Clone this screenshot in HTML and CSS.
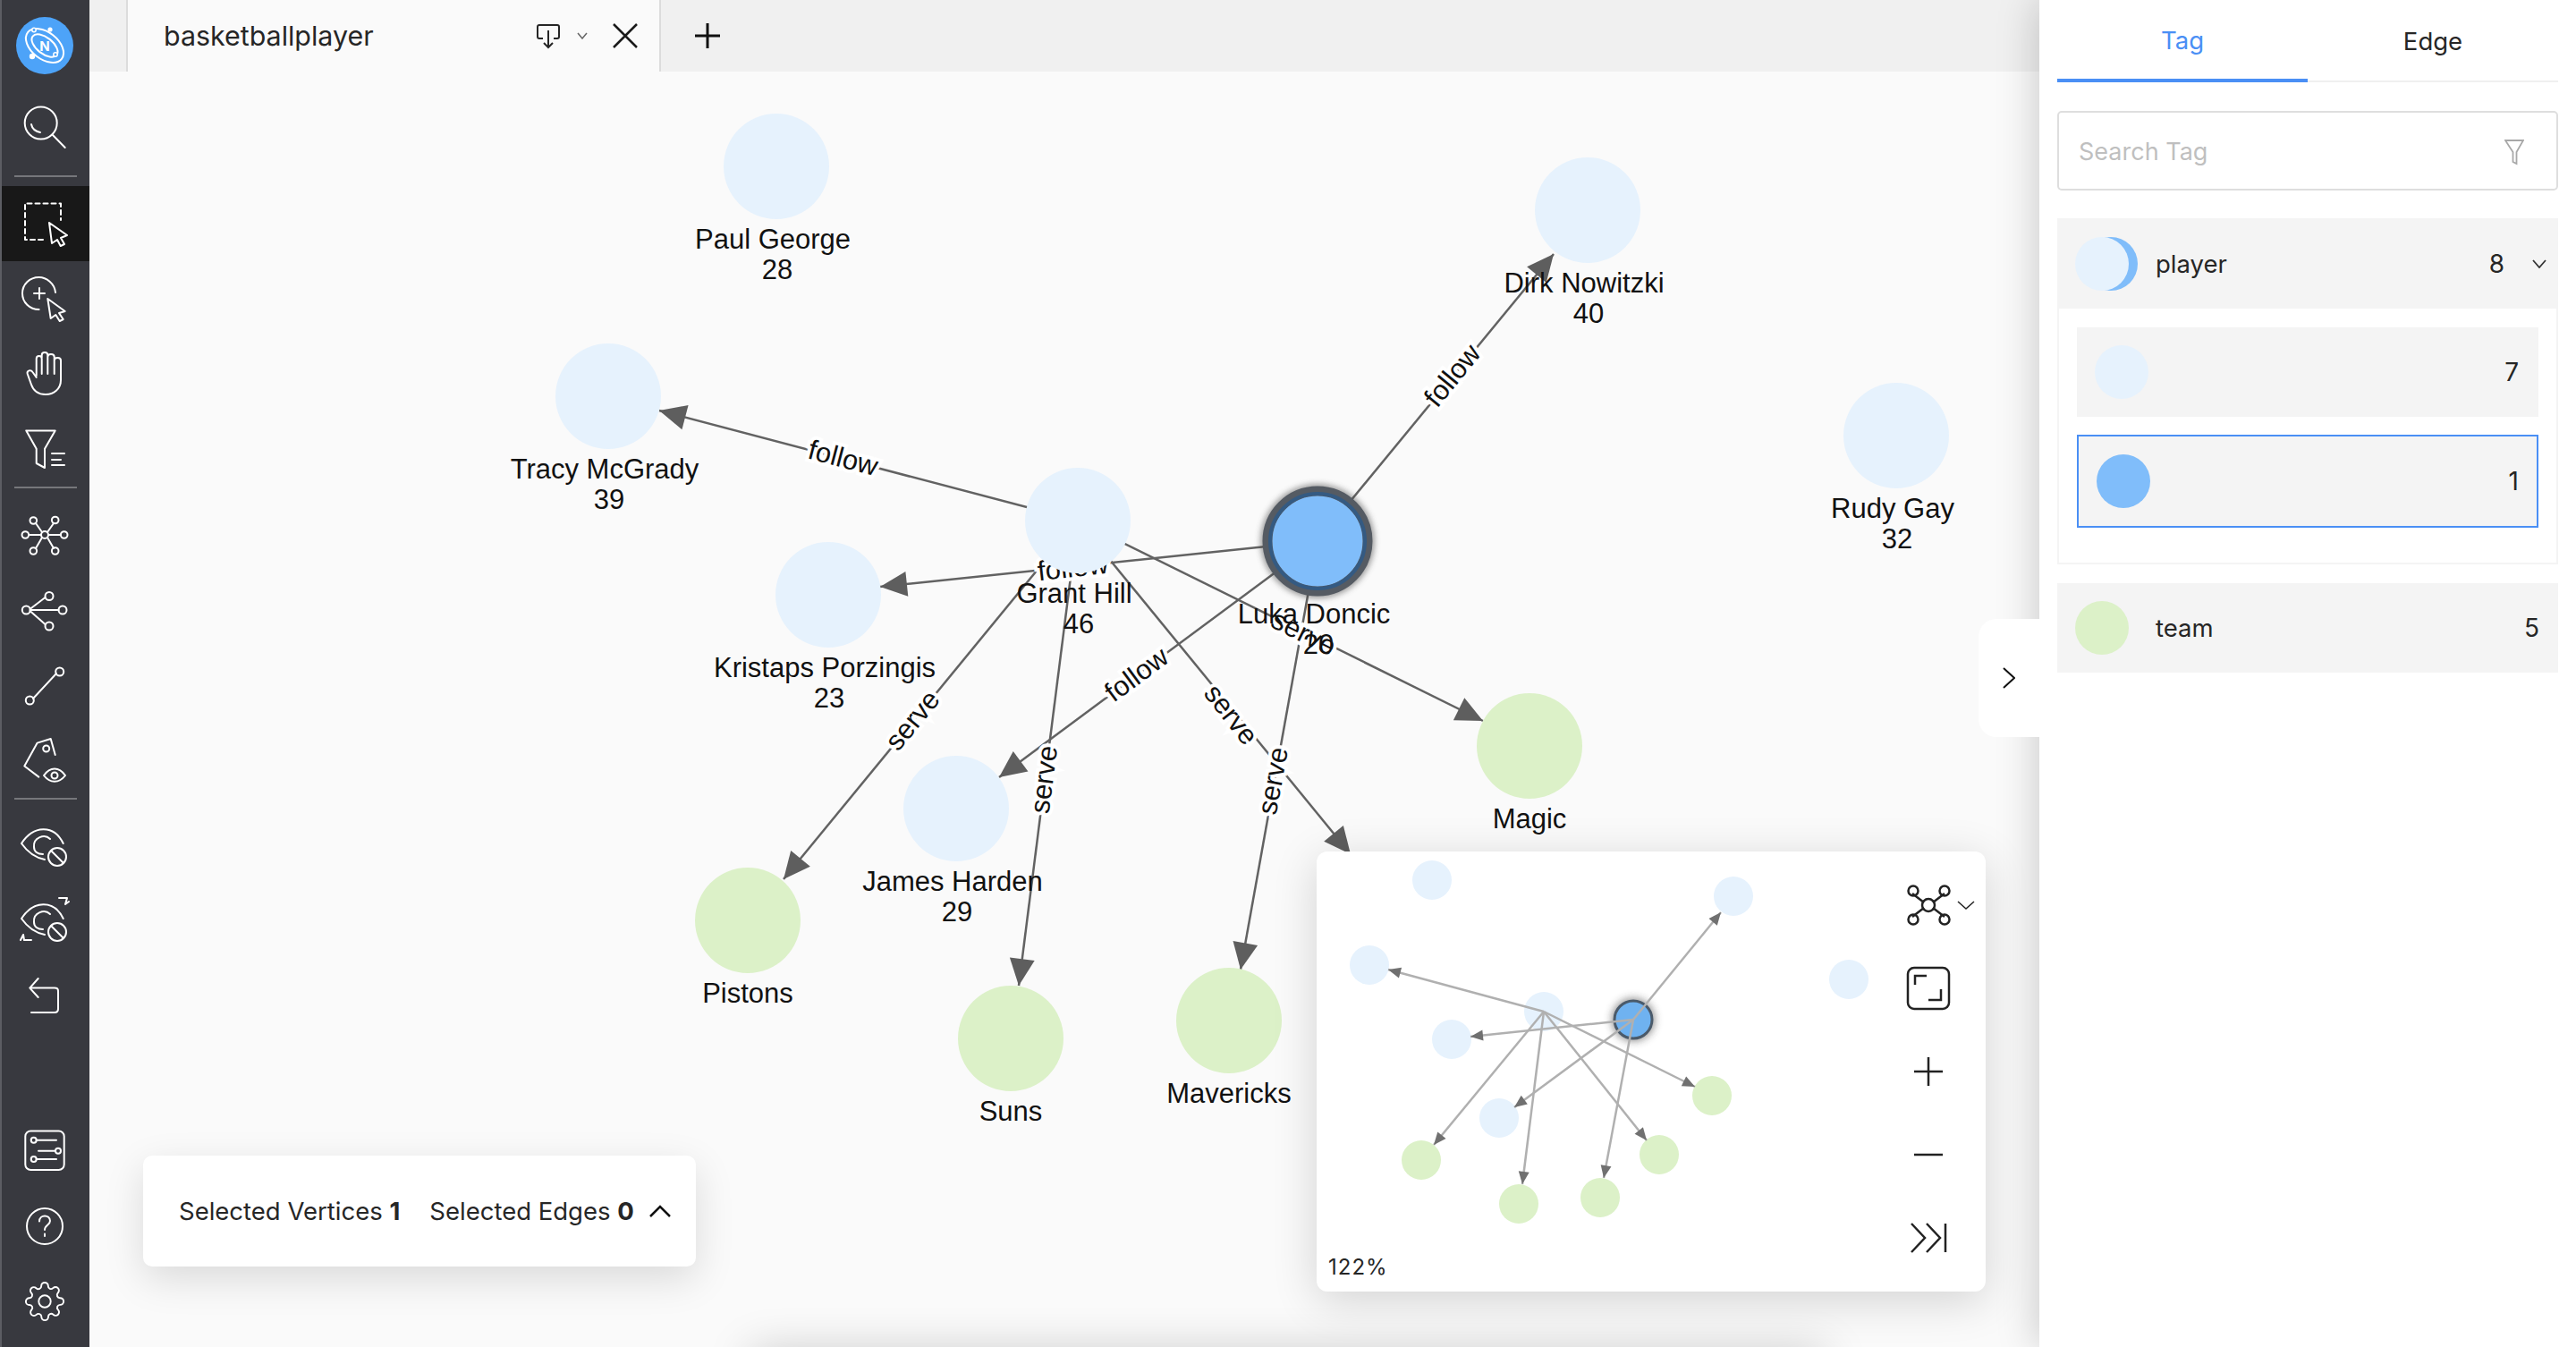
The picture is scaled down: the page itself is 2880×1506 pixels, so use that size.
FILE: index.html
```html
<!DOCTYPE html>
<html lang="en">
<head>
    <meta charset="UTF-8" />
    <title>basketballplayer</title>
    <link rel="stylesheet" href="styles.css">
</head>
<body>

<div class="app">
    <aside class="sidebar">
        <div class="logo">
            <svg width="64" height="64" viewBox="0 0 64 64">
                <circle cx="32" cy="32" r="32" fill="#4da3f8"/>
                <g fill="none" stroke="#fff" stroke-width="2" transform="rotate(38 32 32)">
                    <ellipse cx="32" cy="32" rx="24" ry="15"/>
                    <ellipse cx="32" cy="32" rx="17" ry="9"/>
                </g>
                <circle cx="38" cy="14" r="2.6" fill="#fff"/>
                <circle cx="20" cy="14.500" r="2.2" fill="#4da3f8" stroke="#fff" stroke-width="1.5"/>
                <circle cx="18" cy="44" r="3.2" fill="#fff"/>
                <circle cx="44" cy="42" r="2.2" fill="#4da3f8" stroke="#fff" stroke-width="1.5"/>
                <text x="32" y="37.500" class="logo-letter">N</text>
            </svg>
        </div>

        <div class="tool tool-search">
            <svg class="icon" viewBox="0 0 60 60"><circle cx="25.700" cy="26.500" r="18"/><path d="M38.500 39.500 52.700 54M15 28c1 5 5 8 10 9"/></svg>
        </div>
        <div class="divider"></div>

        <div class="tool active">
            <svg class="icon" viewBox="0 0 60 60"><path d="M28 48H8V7.500H48V26" stroke-dasharray="5 4"/><path d="M35 29 55 43 48 46 52 53 47.700 55 44 48 38 52Z"/></svg>
        </div>
        <div class="tool">
            <svg class="icon" viewBox="0 0 60 60"><path d="M42 23C41 13 32 6 23.600 6 13 6 5 14 5 24 5 34 13 42 23.600 42M18 24H30M24 18V30"/><path d="M33.300 30 52.700 44 46 46 50.700 53 46.700 55 42.300 48 36.700 52Z"/></svg>
        </div>
        <div class="tool">
            <svg class="icon" viewBox="0 0 60 60"><path d="M20.700 32V13C20.700 9 26.700 9 26.700 13V30M26.700 12V9C26.700 5 33.300 5 33.300 9V30M33.300 11C33.300 7 40.700 7 40.700 11V30M40.700 15C40.700 11 48 11 48 15V37C48 47 40 53 31 53 22 53 17 48 15 42L10.700 30C9.700 26 14.500 25 16.500 28L20.700 34"/></svg>
        </div>
        <div class="tool">
            <svg class="icon" viewBox="0 0 60 60"><path d="M9.300 9.400H41.700L30 29.800V51L20.700 46V29.800ZM38 35H52M38 42H48M38 48H52"/></svg>
        </div>
        <div class="divider divider-tight"></div>

        <div class="tool">
            <svg class="icon" viewBox="0 0 60 60"><path d="M12 30H26M34 30H48M20 17 27 27M40 17 33 27M20 45 27 33M40 45 33 33"/><circle cx="30" cy="30" r="4"/><circle cx="8.300" cy="30" r="3.800"/><circle cx="51.700" cy="30" r="3.800"/><circle cx="17.300" cy="14" r="3.800"/><circle cx="41.700" cy="13.500" r="3.800"/><circle cx="17.300" cy="48" r="3.800"/><circle cx="41.700" cy="48" r="3.800"/></svg>
        </div>
        <div class="tool">
            <svg class="icon" viewBox="0 0 60 60"><path d="M13.500 29 30.500 16M13.800 30H45.500M13.500 31 30.500 46"/><circle cx="9.300" cy="30" r="4.500"/><circle cx="35" cy="14.500" r="4.500"/><circle cx="50" cy="30" r="4.500"/><circle cx="35" cy="48" r="4.500"/></svg>
        </div>
        <div class="tool">
            <svg class="icon" viewBox="0 0 60 60"><path d="M17 45 43 17"/><circle cx="13.300" cy="47" r="4.500"/><circle cx="46.700" cy="15" r="4.500"/></svg>
        </div>
        <div class="tool">
            <svg class="icon" viewBox="0 0 60 60"><path d="M23.300 48.600 7.300 36.500 21.700 10.600 36.700 6 41.700 24"/><circle cx="31.700" cy="17" r="3.500"/><path d="M29 47C36 37 46 37 53 47 46 56 36 56 29 47Z"/><circle cx="41" cy="47" r="3.500"/></svg>
        </div>
        <div class="divider divider-tight"></div>

        <div class="tool">
            <svg class="icon" viewBox="0 0 60 60"><path d="M50.700 27C40 5 17 7 4 27 11 37 20 43 30 45"/><path d="M36 22C30 16 17 20 18 31 18 36 22 39 28 39"/><circle cx="44" cy="42" r="10"/><path d="M37 35 51 49"/></svg>
        </div>
        <div class="tool">
            <svg class="icon" viewBox="0 0 60 60"><path d="M50.700 27C40 5 17 7 4 27 11 37 20 43 30 45"/><path d="M36 22C30 16 17 20 18 31 18 36 22 39 28 39"/><circle cx="44" cy="42" r="10"/><path d="M37 35 51 49M46 4H55L53 11 57 8M3 51 6 45 7 51H15"/></svg>
        </div>
        <div class="tool">
            <svg class="icon" viewBox="0 0 60 60"><path d="M22.700 10 13.300 20.600 22.700 31M13.300 20.600H41C44 20.600 45 22 45 24V44C45 47 44 48 41 48H15"/></svg>
        </div>

        <div class="tool tool-bottom">
            <svg class="icon" viewBox="0 0 60 60"><rect x="8.300" y="7.500" width="43.400" height="43.500" rx="6"/><circle cx="17.700" cy="17.700" r="3"/><path d="M20.700 17.700H43M23 29.700H42"/><circle cx="45" cy="29.700" r="3"/><circle cx="17.700" cy="39" r="3"/><path d="M20.700 39H43"/></svg>
        </div>
        <div class="tool">
            <svg class="icon" viewBox="0 0 60 60"><circle cx="30" cy="30" r="20"/><path d="M24 24.500C24 16.500 36 16.500 36 24 36 28.500 30 28.500 30 34"/><path d="M30 38.500V41"/></svg>
        </div>
        <div class="tool">
            <svg class="icon gear" viewBox="0 0 24 24"><circle cx="12" cy="12" r="3.500"/><path d="M19.400 15a1.650 1.650 0 0 0 .33 1.820l.06.06a2 2 0 0 1 0 2.830 2 2 0 0 1-2.830 0l-.06-.06a1.650 1.650 0 0 0-1.820-.33 1.650 1.650 0 0 0-1 1.510V21a2 2 0 0 1-2 2 2 2 0 0 1-2-2v-.09A1.650 1.650 0 0 0 9 19.400a1.650 1.650 0 0 0-1.820.33l-.06.06a2 2 0 0 1-2.830 0 2 2 0 0 1 0-2.830l.06-.06a1.650 1.650 0 0 0 .33-1.820 1.650 1.650 0 0 0-1.510-1H3a2 2 0 0 1-2-2 2 2 0 0 1 2-2h.09A1.650 1.650 0 0 0 4.600 9a1.650 1.650 0 0 0-.33-1.820l-.06-.06a2 2 0 0 1 0-2.830 2 2 0 0 1 2.830 0l.06.06a1.650 1.650 0 0 0 1.820.33H9a1.650 1.650 0 0 0 1-1.510V3a2 2 0 0 1 2-2 2 2 0 0 1 2 2v.09a1.650 1.650 0 0 0 1 1.510 1.650 1.650 0 0 0 1.820-.33l.06-.06a2 2 0 0 1 2.830 0 2 2 0 0 1 0 2.830l-.06.06a1.650 1.650 0 0 0-.33 1.820V9a1.650 1.650 0 0 0 1.510 1H21a2 2 0 0 1 2 2 2 2 0 0 1-2 2h-.09a1.650 1.650 0 0 0-1.510 1z"/></svg>
        </div>
    </aside>

    <main class="main">
        <div class="tabbar">
            <div class="tab">
                <span class="tab-name">basketballplayer</span>
                <svg class="tab-download" width="30" height="30" viewBox="0 0 30 30"><path d="M9 18H5C3.500 18 3 17 3 16V5C3 3.500 3.500 3 5 3H25C26.500 3 27 3.500 27 5V16C27 17 26.500 18 25 18H21M15 9V28M10 23 15 28 20 23"/></svg>
                <svg class="tab-caret" width="12" height="8" viewBox="0 0 12 8"><path d="M1 1 6 7 11 1"/></svg>
                <svg class="tab-close" width="28" height="28" viewBox="0 0 28 28"><path d="M1 1 27 27M27 1 1 27"/></svg>
            </div>
            <svg class="tab-add" width="30" height="30" viewBox="0 0 30 30"><path d="M15 1V29M1 15H29"/></svg>
        </div>

        <div class="canvas">
            <svg class="graph" id="graph" xmlns="http://www.w3.org/2000/svg"></svg>

            <div class="selected-card">
                <span>Selected Vertices <b>1</b></span>
                <span>Selected Edges <b>0</b></span>
                <svg width="24" height="14" viewBox="0 0 24 14"><path d="M1 13 12 2 23 13"/></svg>
            </div>

            <div class="minimap">
                <svg class="mini-graph" id="mini"></svg>
                <span class="zoom-level">122%</span>
                <div class="mini-tools">
                    <div class="mini-tool">
                        <svg class="layout-icon" width="96" height="50" viewBox="0 0 96 50"><path d="M30 12 43 22M66 12 53 22M30 38 43 28M66 38 53 28"/><circle cx="48" cy="25" r="7"/><circle cx="31" cy="9" r="5.500"/><circle cx="66" cy="9" r="5.500"/><circle cx="31" cy="41" r="5.500"/><circle cx="66" cy="41" r="5.500"/><path class="thin" d="M81 21 90 29 99 21"/></svg>
                    </div>
                    <div class="mini-tool">
                        <svg width="50" height="50" viewBox="0 0 50 50"><rect x="2" y="2" width="46" height="46" rx="7"/><path d="M10 21V11H23M39 26V38H25"/></svg>
                    </div>
                    <div class="mini-tool">
                        <svg width="36" height="36" viewBox="0 0 36 36"><path d="M18 2V34M2 18H34"/></svg>
                    </div>
                    <div class="mini-tool">
                        <svg width="36" height="8" viewBox="0 0 36 8"><path d="M2 4H34"/></svg>
                    </div>
                    <div class="mini-tool">
                        <svg width="44" height="36" viewBox="0 0 44 36"><path d="M3 2 18 18 3 34M20 2 35 18 20 34M41 2V34"/></svg>
                    </div>
                </div>
            </div>

            <div class="drawer-edge"></div>
        </div>
    </main>

    <aside class="panel">
        <div class="panel-toggle">
            <svg width="14" height="24" viewBox="0 0 14 24"><path d="M1 1 13 12 1 23"/></svg>
        </div>

        <div class="panel-tabs">
            <div class="panel-tab current">Tag</div>
            <div class="panel-tab">Edge</div>
        </div>

        <div class="search">
            <span>Search Tag</span>
            <svg width="22" height="30" viewBox="0 0 22 30"><path d="M1 2H21L13.500 15V28L9.500 26V15Z"/></svg>
        </div>

        <div class="tag-row">
            <span class="dot-stack"><i class="dot dot-blue"></i><i class="dot dot-pale"></i></span>
            <span class="tag-name">player</span>
            <span class="tag-count">8</span>
            <svg class="tag-caret" width="16" height="10" viewBox="0 0 16 10"><path d="M1 1 8 9 15 1"/></svg>
        </div>
        <div class="tag-group">
            <div class="style-row">
                <i class="dot dot-pale"></i>
                <span class="tag-count">7</span>
            </div>
            <div class="style-row picked">
                <i class="dot dot-blue"></i>
                <span class="tag-count">1</span>
            </div>
        </div>

        <div class="tag-row team-row">
            <i class="dot dot-green"></i>
            <span class="tag-name">team</span>
            <span class="tag-count">5</span>
        </div>
    </aside>
</div>

<script src="graph.js"></script>
</body>
</html>
```

FILE: styles.css
```css
* {
    box-sizing: border-box;
}
html, body {
    margin: 0;
    height: 100%;
    overflow: hidden;
}
body {
    font-family: Inter, "Noto Sans", sans-serif;
    color: #262626;
}
svg {
    display: block;
    fill: none;
}
.app {
    display: flex;
    height: 1506px;
}

/* left toolbar */
.sidebar {
    width: 100px;
    flex: none;
    display: flex;
    flex-direction: column;
    padding: 19px 0 9px 2px;
    background: #38393f;
    box-shadow: inset 2px 0 0 #5c5d63;
}
.logo {
    height: 64px;
    margin-left: 16px;
}
.logo-letter {
    font-size: 15px;
    font-weight: 700;
    text-anchor: middle;
    fill: #fff;
}
.tool {
    height: 84px;
    flex: none;
    display: flex;
    align-items: center;
    justify-content: center;
    margin-left: -2px;
}
.tool.active {
    background: #181818;
    margin-left: 0;
    padding-right: 2px;
}
.tool-search {
    margin-top: 16px;
    margin-bottom: 13px;
}
.tool-bottom {
    margin-top: auto;
}
.icon {
    width: 60px;
    height: 60px;
    stroke: #fff;
    stroke-width: 2;
    stroke-linejoin: round;
    stroke-linecap: round;
}
.gear {
    width: 46px;
    height: 46px;
    stroke-width: 1;
}
.divider {
    height: 2px;
    flex: none;
    margin: 0 14px 10px 14px;
    background: #76777b;
}
.divider-tight {
    margin-top: 0;
}

/* tabs */
.main {
    flex: 1;
    display: flex;
    flex-direction: column;
    min-width: 0;
}
.tabbar {
    height: 80px;
    flex: none;
    display: flex;
    align-items: center;
    padding-left: 41px;
    background: #f0f0f0;
}
.tab {
    width: 598px;
    height: 80px;
    display: flex;
    align-items: center;
    padding-left: 40px;
    background: #fafafa;
    border-left: 2px solid #dcdcdc;
    border-right: 2px solid #dcdcdc;
}
.tab-name {
    font-size: 30.4px;
    width: 415px;
}
.tab-download {
    stroke: #262626;
    stroke-width: 2;
}
.tab-caret {
    margin-left: 17px;
    stroke: #666;
    stroke-width: 1.500;
}
.tab-close {
    margin-left: 28px;
    stroke: #1a1a1a;
    stroke-width: 2.500;
}
.tab-add {
    margin-left: 37px;
    stroke: #111;
    stroke-width: 3;
}

/* graph area */
.canvas {
    flex: 1;
    position: relative;
    background: #fafafa;
    overflow: hidden;
}
.graph {
    position: absolute;
    left: 0;
    top: 0;
    width: 100%;
    height: 100%;
}
.node-name {
    font-family: "Liberation Sans", Arial, sans-serif;
    font-size: 31px;
    fill: #111;
    text-anchor: middle;
}
.edge-name {
    font-family: "Liberation Sans", Arial, sans-serif;
    font-size: 31px;
    fill: #111;
    text-anchor: middle;
    stroke: #fff;
    stroke-width: 8px;
    paint-order: stroke;
}
.selected-card {
    position: absolute;
    left: 60px;
    top: 1212px;
    width: 618px;
    height: 124px;
    display: flex;
    align-items: center;
    padding-left: 40px;
    gap: 33px;
    font-size: 27.5px;
    background: #fff;
    border-radius: 10px;
    box-shadow: 0 14px 44px rgba(0, 0, 0, 0.13);
}
.selected-card svg {
    margin-left: -16px;
    stroke: #111;
    stroke-width: 2.500;
}
.minimap {
    position: absolute;
    left: 1372px;
    top: 872px;
    width: 748px;
    height: 492px;
    display: flex;
    background: #fff;
    border-radius: 12px;
    box-shadow: 0 10px 50px rgba(0, 0, 0, 0.16);
}
.mini-graph {
    flex: 1;
    height: 100%;
    filter: blur(0.6px);
}
.zoom-level {
    position: absolute;
    left: 13px;
    top: 450px;
    font-size: 24px;
    letter-spacing: 1px;
}
.mini-tools {
    width: 128px;
    flex: none;
    display: flex;
    flex-direction: column;
    padding-top: 13px;
    stroke: #222;
    stroke-width: 2.500;
}
.mini-tool {
    height: 93px;
    display: flex;
    align-items: center;
    justify-content: center;
}
.layout-icon {
    overflow: visible;
}
.mini-tool .thin {
    stroke-width: 1.500;
}
.drawer-edge {
    position: absolute;
    left: 740px;
    right: 240px;
    top: 1432px;
    height: 40px;
    box-shadow: 0 0 50px rgba(0, 0, 0, 0.22);
}

/* right panel */
.panel {
    width: 600px;
    flex: none;
    position: relative;
    padding: 0 20px;
    background: #fff;
    box-shadow: 0 0 44px rgba(0, 0, 0, 0.22);
}
.panel-toggle {
    position: absolute;
    left: -68px;
    top: 692px;
    width: 68px;
    height: 132px;
    display: flex;
    align-items: center;
    justify-content: center;
    background: #fff;
    border-radius: 20px 0 0 20px;
    stroke: #111;
    stroke-width: 2;
}
.panel-tabs {
    display: flex;
    height: 92px;
    border-bottom: 2px solid #f0f0f0;
}
.panel-tab {
    flex: 1;
    height: 92px;
    display: flex;
    align-items: center;
    justify-content: center;
    font-size: 27.5px;
}
.panel-tab.current {
    color: #4a8ff5;
    border-bottom: 4px solid #4a8ff5;
    padding-top: 2px;
}
.search {
    height: 89px;
    margin-top: 32px;
    display: flex;
    align-items: center;
    justify-content: space-between;
    padding: 2px 36px 0 22px;
    border: 2px solid #dedede;
    border-radius: 5px;
    font-size: 27px;
    color: #bfbfbf;
    stroke: #a8a8a8;
    stroke-width: 1.800;
}
.tag-row {
    height: 101px;
    margin-top: 31px;
    display: flex;
    align-items: center;
    padding-left: 20px;
    background: #f4f4f4;
}
.team-row {
    height: 100px;
    margin-top: 21px;
    padding-right: 21px;
}
.team-row .tag-name {
    margin-left: 30px;
}
.tag-name {
    font-size: 27.5px;
    margin-left: 20px;
}
.tag-count {
    margin-left: auto;
    font-size: 28px;
}
.tag-caret {
    margin: 0 13px 0 31px;
    stroke: #333;
    stroke-width: 1.800;
}
.dot {
    display: block;
    width: 60px;
    height: 60px;
    border-radius: 50%;
    flex: none;
}
.dot-pale {
    background: #e6f2fd;
}
.dot-blue {
    background: #80bdfa;
}
.dot-green {
    background: #dcf1c8;
}
.dot-stack {
    display: flex;
    width: 70px;
}
.dot-stack .dot-pale {
    margin-left: -70px;
}
.dot-stack .dot-blue {
    margin-left: 10px;
}
.tag-group {
    height: 286px;
    display: flex;
    flex-direction: column;
    gap: 20px;
    padding: 21px 20px 0;
    border: 2px solid #f4f4f4;
    border-top: 0;
}
.style-row {
    height: 100px;
    display: flex;
    align-items: center;
    padding: 0 22px 0 20px;
    background: #f4f4f4;
}
.style-row.picked {
    height: 104px;
    border: 2px solid #4a8ff5;
    padding: 0 20px 0 20px;
}
```

FILE: graph.js
```js
// positions are page coordinates, the canvas starts at 100,80
const PALE = "#e6f2fd", GREEN = "#dcf1c8", BLUE = "#80bdfa";

const nodes = {
    paul: { x: 868, y: 186, c: PALE, name: "Paul George", age: 28 },
    dirk: { x: 1775, y: 235, c: PALE, name: "Dirk Nowitzki", age: 40 },
    tracy: { x: 680, y: 443, c: PALE, name: "Tracy McGrady", age: 39 },
    rudy: { x: 2120, y: 487, c: PALE, name: "Rudy Gay", age: 32 },
    grant: { x: 1205, y: 582, c: PALE, name: "Grant Hill", age: 46 },
    kristaps: { x: 926, y: 665, c: PALE, name: "Kristaps Porzingis", age: 23 },
    luka: { x: 1473, y: 605, c: BLUE, name: "Luka Doncic", age: 20, picked: true },
    harden: { x: 1069, y: 904, c: PALE, name: "James Harden", age: 29 },
    magic: { x: 1710, y: 834, c: GREEN, name: "Magic" },
    pistons: { x: 836, y: 1029, c: GREEN, name: "Pistons" },
    suns: { x: 1130, y: 1161, c: GREEN, name: "Suns" },
    mavs: { x: 1374, y: 1141, c: GREEN, name: "Mavericks" },
    raptors: { x: 1547, y: 1016, c: GREEN, name: "" }
};

// from, to, label, arrow tip
const edges = [
    ["luka", "dirk", "follow", 1737, 284],
    ["grant", "tracy", "follow", 737, 459],
    ["luka", "kristaps", "follow", 984, 656],
    ["grant", "magic", "serve", 1658, 806],
    ["grant", "pistons", "serve", 876, 983],
    ["grant", "suns", "serve", 1139, 1102],
    ["grant", "raptors", "serve", 1510, 955],
    ["luka", "harden", "follow", 1117, 869],
    ["luka", "mavs", "serve", 1387, 1084]
];

const miniNodes = {
    paul: [129, 32], dirk: [466, 50], tracy: [59, 127], rudy: [595, 143],
    grant: [254, 179], kristaps: [151, 210], luka: [354, 188], harden: [204, 298],
    magic: [442, 273], pistons: [117, 345], suns: [226, 394], mavs: [317, 387],
    raptors: [383, 339]
};
const miniTips = [
    [452, 68], [80, 132], [172, 207], [423, 263], [131, 328],
    [230, 372], [369, 323], [221, 286], [321, 365]
];

const NS = "http://www.w3.org/2000/svg";

function el(parent, tag, attrs, text) {
    const e = document.createElementNS(NS, tag);
    for (const k in attrs) e.setAttribute(k, attrs[k]);
    if (text !== undefined) e.textContent = text;
    parent.appendChild(e);
    return e;
}

function arrowHead(parent, fromX, fromY, tipX, tipY, len, half, color) {
    const a = Math.atan2(tipY - fromY, tipX - fromX);
    const bx = tipX - len * Math.cos(a), by = tipY - len * Math.sin(a);
    const px = half * Math.sin(a), py = half * Math.cos(a);
    el(parent, "polygon", {
        points: `${tipX},${tipY} ${bx + px},${by - py} ${bx - px},${by + py}`,
        fill: color
    });
}

function drawGraph() {
    const root = document.getElementById("graph");
    const defs = el(root, "defs", {});
    const glow = el(defs, "filter", { id: "glow", x: "-30%", y: "-30%", width: "160%", height: "160%" });
    el(glow, "feGaussianBlur", { stdDeviation: "3" });
    const svg = el(root, "g", { transform: "translate(-100 -80)" });

    edges.forEach(([a, b, , tx, ty]) => {
        const from = nodes[a];
        el(svg, "line", {
            x1: from.x, y1: from.y, x2: tx, y2: ty,
            stroke: "#626262", "stroke-width": 2.5
        });
        arrowHead(svg, from.x, from.y, tx, ty, 30, 14, "#5e5e5e");
    });

    edges.forEach(([a, b, label]) => {
        const from = nodes[a], to = nodes[b];
        const mx = (from.x + to.x) / 2, my = (from.y + to.y) / 2;
        let deg = Math.atan2(to.y - from.y, to.x - from.x) * 180 / Math.PI;
        if (deg > 90) deg -= 180;
        if (deg < -90) deg += 180;
        el(svg, "text", {
            class: "edge-name",
            transform: `translate(${mx} ${my}) rotate(${deg}) translate(0 10)`
        }, label);
    });

    for (const key in nodes) {
        const n = nodes[key];
        if (n.picked) {
            el(svg, "circle", { cx: n.x, cy: n.y, r: 64, fill: "#444", opacity: 0.5, filter: "url(#glow)" });
            el(svg, "circle", { cx: n.x, cy: n.y, r: 56, fill: n.c, stroke: "#555b63", "stroke-width": 11 });
            el(svg, "circle", { cx: n.x, cy: n.y, r: 53, fill: "none", stroke: "#345a82", "stroke-width": 4 });
        } else if (n.name) {
            el(svg, "circle", { cx: n.x, cy: n.y, r: 59, fill: n.c });
        }
    }

    for (const key in nodes) {
        const n = nodes[key];
        if (!n.name) continue;
        const base = n.y + 92;
        if (n.age) {
            el(svg, "text", { class: "node-name", x: n.x - 4, y: base }, n.name);
            el(svg, "text", { class: "node-name", x: n.x + 1, y: base + 34 }, n.age);
        } else {
            el(svg, "text", { class: "node-name", x: n.x, y: base }, n.name);
        }
    }
}

function drawMini() {
    const svg = document.getElementById("mini");
    for (const key in miniNodes) {
        const [x, y] = miniNodes[key];
        if (key === "luka") continue;
        el(svg, "circle", { cx: x, cy: y, r: 22, fill: nodes[key].c });
    }
    const defs = el(svg, "defs", {});
    const glow = el(defs, "filter", { id: "miniglow", x: "-50%", y: "-50%", width: "200%", height: "200%" });
    el(glow, "feGaussianBlur", { stdDeviation: "5" });
    const [lx, ly] = miniNodes.luka;
    el(svg, "circle", { cx: lx, cy: ly, r: 24, fill: "#333", opacity: 0.55, filter: "url(#miniglow)" });
    el(svg, "circle", { cx: lx, cy: ly, r: 21, fill: "#6fb2f0", stroke: "#4a5a6a", "stroke-width": 3 });

    edges.forEach(([a], i) => {
        const [x, y] = miniNodes[a];
        const [tx, ty] = miniTips[i];
        el(svg, "line", { x1: x, y1: y, x2: tx, y2: ty, stroke: "#b0b0b0", "stroke-width": 2.5 });
        arrowHead(svg, x, y, tx, ty, 14, 6, "#707070");
    });
}

drawGraph();
drawMini();
```
